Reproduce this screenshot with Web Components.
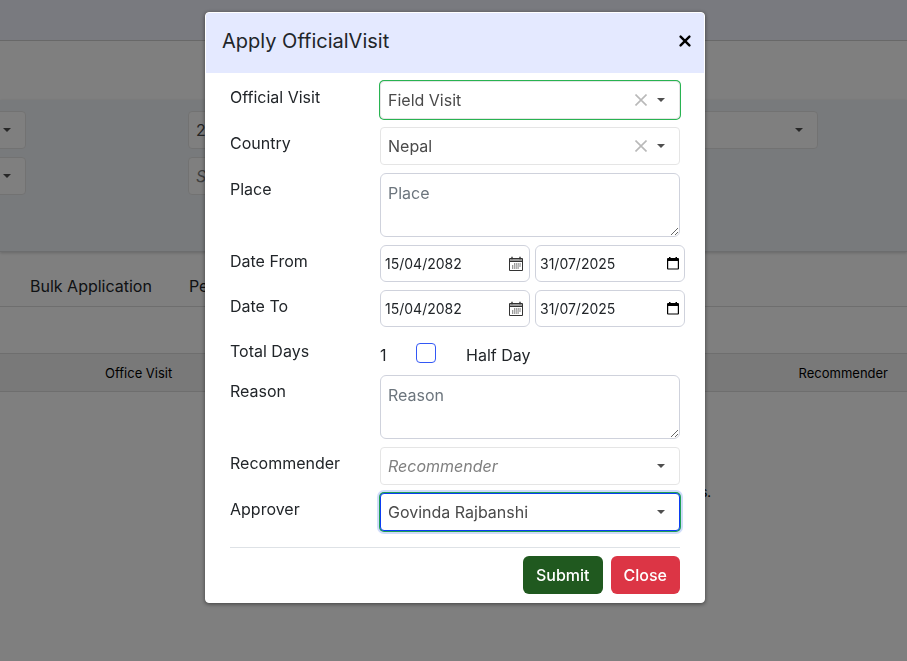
<!DOCTYPE html>
<html lang="en">
<head>
<meta charset="utf-8">
<meta name="viewport" content="width=device-width, initial-scale=1">
<title>Official Visit</title>
<style>
	body {
		margin: 0;
		background-color: #fff;
		color: #212529;
		font: 16px/24px Inter, "Liberation Sans", sans-serif;
		overflow-x: hidden;
	}
</style>
</head>
<body>
<visit-page></visit-page>
<modal-dialog heading="Apply OfficialVisit">
	<select-box label="Official Visit" value="Field Visit" clearable valid></select-box>
	<select-box label="Country" value="Nepal" clearable></select-box>
	<text-area label="Place"></text-area>
	<date-pair label="Date From" bs="15/04/2082" ad="31/07/2025"></date-pair>
	<date-pair label="Date To" bs="15/04/2082" ad="31/07/2025"></date-pair>
	<total-days label="Total Days" days="1"></total-days>
	<text-area label="Reason"></text-area>
	<select-box label="Recommender" value="Recommender" empty></select-box>
	<select-box label="Approver" value="Govinda Rajbanshi" active></select-box>
	<action-button slot="footer" kind="submit">Submit</action-button>
	<action-button slot="footer" kind="close">Close</action-button>
</modal-dialog>

<script>
class BaseElement extends HTMLElement {
	constructor() {
		super();
		this.attachShadow({ mode: 'open' });
	}

	connectedCallback() {
		this.shadowRoot.innerHTML = `
			<style>
			* { box-sizing: border-box; }
			:host { display: block; }
			input, textarea, select, button { margin: 0; font: inherit; color: inherit; }
			</style>
			${this.render()}
		`;
	}

	attr(name) {
		return this.getAttribute(name) || '';
	}
}

// a control with its label on the left; without a label only the control is shown
class FieldElement extends BaseElement {
	render() {
		return `
		<style>
		:host {
			min-width: 0;
		}

		:host([label]) {
			display: grid;
			grid-template-columns: minmax(0, 1fr) minmax(0, 2fr);
		}

		.label {
			padding-top: 4px;
		}
		</style>
		${this.hasAttribute('label') ? `<label class="label" for="field">${this.attr('label')}</label>` : ''}
		${this.control()}
		`;
	}
}

class SelectBox extends FieldElement {
	control() {
		return `
		<style>
		.box {
			display: grid;
			align-items: center;
			height: 38px;
			border: 1px solid #e5e5e5;
			border-radius: 4px;
			background-color: #fff;
			color: #4a4a4a;
		}

		:host([valid]) .box {
			box-shadow: 0 0 0 1px #28b351;
		}

		:host([active]) .box {
			border-color: #0b3df2;
			box-shadow: 0 0 0 1px #1fa055, 0 0 0 3px #d0dcfa;
		}

		select, .icons {
			grid-area: 1 / 1;
		}

		select {
			appearance: none;
			width: 100%;
			height: 36px;
			padding: 0 56px 0 7px;
			border: 0;
			background: none;
			outline: none;
		}

		:host([empty]) select {
			font-style: italic;
			color: #808080;
		}

		.icons {
			display: flex;
			align-items: center;
			justify-self: end;
			gap: 10px;
			padding-right: 14px;
			pointer-events: none;
		}

		button {
			display: flex;
			padding: 0;
			border: 0;
			background: none;
			pointer-events: auto;
		}
		</style>
		<div class="box">
			<select id="field"${this.hasAttribute('name') ? ` aria-label="${this.attr('name')}"` : ''}>
				<option>${this.attr('value')}</option>
			</select>
			<span class="icons">
				${this.hasAttribute('clearable') ? `
				<button type="button" aria-label="Clear">
					<svg width="12" height="12" viewBox="0 0 12 12" stroke="#b9b9b9" stroke-width="1.6"><path d="M.5.5l11 11M11.5.5l-11 11"/></svg>
				</button>` : ''}
				<svg width="8" height="4" viewBox="0 0 8 4"><path d="M0 0h8L4 4z" fill="#4f4f4f"/></svg>
			</span>
		</div>
		`;
	}
}

class TextArea extends FieldElement {
	control() {
		return `
		<style>
		textarea {
			display: block;
			width: 100%;
			height: 64px;
			padding: 7px;
			border: 1px solid #cfd2dc;
			border-radius: 6px;
			background-color: #fff;
			resize: vertical;
		}

		textarea::placeholder {
			color: #6c757d;
			opacity: 1;
		}
		</style>
		<textarea id="field" placeholder="${this.attr('label')}"></textarea>
		`;
	}
}

class DatePair extends FieldElement {
	control() {
		return `
		<style>
		.pair {
			display: grid;
			grid-template-columns: repeat(2, minmax(0, 1fr));
			gap: 5px;
			margin-right: -5px;
		}

		.date {
			display: flex;
			align-items: center;
			height: 37px;
			padding: 0 5px 0 4px;
			border: 1px solid #cfd2dc;
			border-radius: 6px;
			background-color: #fff;
			font-size: 14px;
		}

		input {
			flex: 1;
			min-width: 0;
			padding: 0;
			border: 0;
			outline: none;
			background: none;
		}

		button {
			display: flex;
			padding: 0;
			border: 0;
			background: none;
		}
		</style>
		<div class="pair">
			<div class="date">
				<input type="text" id="field" value="${this.attr('bs')}">
				<button type="button" aria-label="Open Nepali calendar">
					<svg width="16" height="16" viewBox="0 0 16 16" fill="none" stroke="#333">
						<path d="M2 3h12v2.5H2z" fill="#999" stroke="none"/>
						<path d="M1.5 2.5h13v12h-13zM1.5 5.5h13"/>
						<path d="M4 .8v2.4M12 .8v2.4" stroke-width="1.4"/>
						<path d="M6 8h7M4 10h9M4 12h7" stroke-width="1.2" stroke-dasharray="1.3 .8"/>
					</svg>
				</button>
			</div>
			<div class="date">
				<input type="text" value="${this.attr('ad')}" aria-label="${this.attr('label')} (AD)">
				<button type="button" aria-label="Open calendar">
					<svg width="12" height="13" viewBox="0 0 12 13">
						<path d="M0 2q0-1 1-1h1V0h1.5v1h5V0H10v1h1q1 0 1 1v9.5q0 1-1 1H1q-1 0-1-1zM1.2 4v7.4h9.6V4z" fill="#000" fill-rule="evenodd"/>
					</svg>
				</button>
			</div>
		</div>
		`;
	}
}

class TotalDays extends FieldElement {
	control() {
		return `
		<style>
		.days {
			display: flex;
			align-items: flex-start;
			gap: 30px;
			padding-top: 8px;
		}

		output {
			width: 6px;
		}

		input {
			appearance: none;
			width: 20px;
			height: 20px;
			border: 1px solid #3358f5;
			border-radius: 4px;
			background-color: #fff;
		}
		</style>
		<div class="days">
			<output id="field">${this.attr('days')}</output>
			<input type="checkbox" id="half">
			<label for="half">Half Day</label>
		</div>
		`;
	}
}

class ActionButton extends BaseElement {
	render() {
		return `
		<style>
		button {
			display: block;
			height: 38px;
			padding: 0 13px;
			border: 0;
			border-radius: 6px;
			background-color: #20591f;
			color: #fff;
			font-weight: 500;
		}

		:host([kind="close"]) button {
			background-color: #dc3545;
		}
		</style>
		<button type="button"><slot></slot></button>
		`;
	}
}

class ModalDialog extends BaseElement {
	render() {
		return `
		<style>
		:host {
			position: fixed;
			inset: 0;
			display: flex;
			justify-content: center;
			align-items: flex-start;
			padding: 12px 0 12px 3px;
			background-color: rgba(0, 0, 0, .5);
			overflow: auto;
		}

		.dialog {
			width: 100%;
			max-width: 500px;
			border: 1px solid #fff;
			border-radius: 4px;
			background-color: #fff;
			box-shadow: 0 1px 4px rgba(0, 0, 0, .5);
		}

		header {
			display: flex;
			align-items: center;
			justify-content: space-between;
			height: 60px;
			padding: 0 13px 5px 16px;
			background-color: #e4e9ff;
			border-radius: 3px 3px 0 0;
		}

		h5 {
			margin: 0;
			font-size: 20px;
			font-weight: 400;
			line-height: 30px;
		}

		header button {
			display: flex;
			padding: 0;
			border: 0;
			background: none;
		}

		.body {
			display: grid;
			gap: 8px;
			padding: 8px 24px 16px;
		}

		footer {
			display: flex;
			justify-content: flex-end;
			gap: 8px;
			margin: 0 24px;
			padding: 8px 0;
			border-top: 1px solid #dee2e6;
		}
		</style>
		<div class="dialog" role="dialog" aria-label="${this.attr('heading')}">
			<header>
				<h5>${this.attr('heading')}</h5>
				<button type="button" aria-label="Close dialog">
					<svg width="12" height="12" viewBox="0 0 12 12" stroke="#000" stroke-width="2.4" stroke-linecap="round"><path d="M1.6 1.6l8.8 8.8M10.4 1.6l-8.8 8.8"/></svg>
				</button>
			</header>
			<div class="body"><slot></slot></div>
			<footer><slot name="footer"></slot></footer>
		</div>
		`;
	}
}

class VisitPage extends BaseElement {
	render() {
		return `
		<style>
		:host {
			overflow: hidden;
		}

		.topbar {
			height: 41px;
			border-bottom: 1px solid #d0d0d0;
			background-color: #f3f4ff;
		}

		.title {
			height: 59px;
		}

		.filters {
			display: grid;
			grid-template-columns: 26px 1fr 220px;
			gap: 8px 162px;
			height: 152px;
			align-content: start;
			padding: 11px 89px 0 0;
			border-bottom: 1px solid #d8dadc;
			background-color: #f1f5f9;
			box-shadow: 0 1px 3px rgba(0, 0, 0, .2);
		}

		.filters .first {
			width: 140px;
			justify-self: end;
		}

		nav {
			display: flex;
			align-items: center;
			gap: 37px;
			height: 55px;
			padding: 13px 0 0 30px;
			line-height: 42px;
			border-bottom: 1px solid #dcdcdc;
		}

		nav a {
			color: inherit;
			text-decoration: none;
		}

		table {
			width: 100%;
			margin-top: 46px;
			border-collapse: collapse;
			color: #000;
			font-size: 13px;
		}

		th {
			height: 38px;
			padding: 0;
			border: solid #dcdcdc;
			border-width: 1px 0;
			background-color: #f3f3f3;
			font-weight: 400;
		}

		th:first-child {
			padding-left: 105px;
			text-align: left;
		}

		th:last-child {
			padding-right: 19px;
			text-align: right;
		}

		td {
			height: 200px;
			padding: 0 196px 0 0;
			text-align: right;
		}
		</style>
		<div class="topbar"></div>
		<div class="title"></div>
		<section class="filters">
			<select-box class="first" name="Branch" value=""></select-box>
			<select-box name="Year" value="2082"></select-box>
			<select-box name="Month" value=""></select-box>
			<select-box class="first" name="Department" value=""></select-box>
			<select-box name="Status" value="Status" empty></select-box>
		</section>
		<nav>
			<a href="#bulk">Bulk Application</a>
			<a href="#pending">Pending</a>
		</nav>
		<table>
			<thead>
				<tr><th>Office Visit</th><th>Recommender</th></tr>
			</thead>
			<tbody>
				<tr><td colspan="2">No records.</td></tr>
			</tbody>
		</table>
		`;
	}
}

customElements.define('select-box', SelectBox);
customElements.define('text-area', TextArea);
customElements.define('date-pair', DatePair);
customElements.define('total-days', TotalDays);
customElements.define('action-button', ActionButton);
customElements.define('modal-dialog', ModalDialog);
customElements.define('visit-page', VisitPage);
</script>
</body>
</html>
